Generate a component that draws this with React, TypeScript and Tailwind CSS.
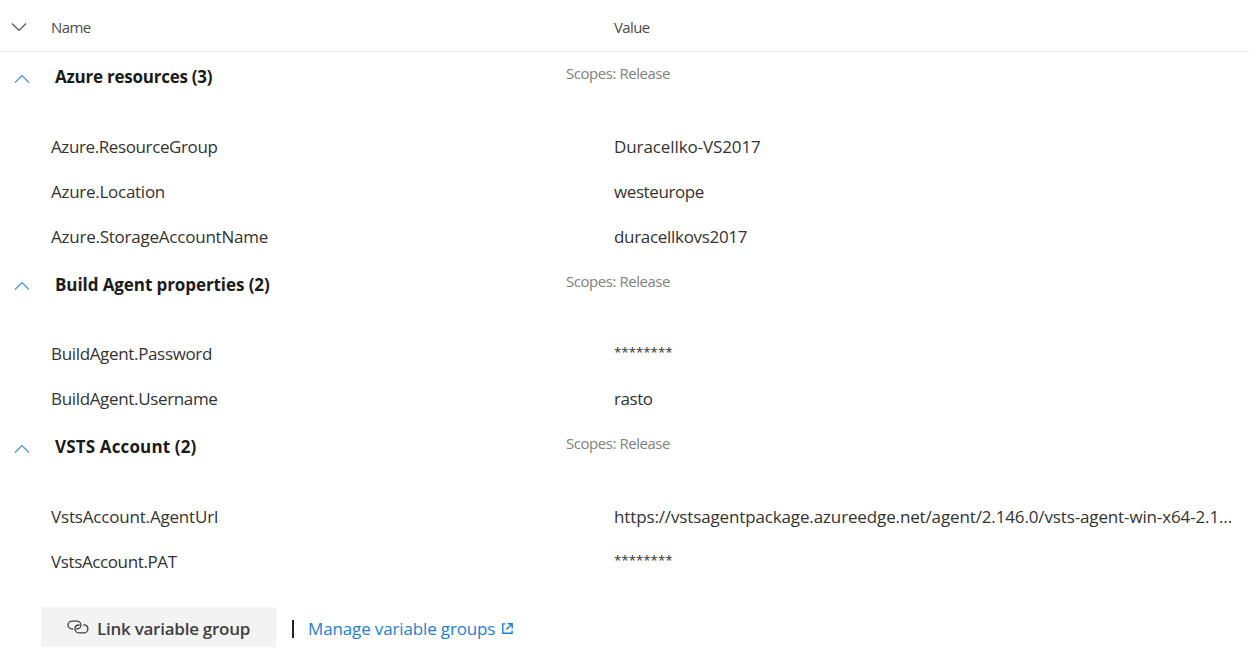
type Variable = {
  name: string;
  nameClass: string;
  value: string;
  valueClass: string;
};

type Group = {
  title: string;
  titleClass: string;
  scopeClass: string;
  chevronClass: string;
  headClass: string;
  variables: Variable[];
};

const SECRET = "text-[13.3px] pb-[1px]";

const groups: Group[] = [
  {
    title: "Azure resources (3)",
    titleClass: "pt-[13px] tracking-[-0.24px]",
    scopeClass: "pt-[9px]",
    chevronClass: "pt-[22px]",
    headClass: "h-[72px]",
    variables: [
      { name: "Azure.ResourceGroup", nameClass: "tracking-[-0.39px]", value: "Duracellko-VS2017", valueClass: "text-[17px] tracking-[-0.1px]" },
      { name: "Azure.Location", nameClass: "tracking-[-0.271px]", value: "westeurope", valueClass: "text-[17px] tracking-[-0.4px]" },
      { name: "Azure.StorageAccountName", nameClass: "tracking-[-0.233px]", value: "duracellkovs2017", valueClass: "text-[17px] tracking-[-0.31px]" },
    ],
  },
  {
    title: "Build Agent properties (2)",
    titleClass: "pt-[14px] tracking-[-0.08px]",
    scopeClass: "pt-[10px]",
    chevronClass: "pt-[22px]",
    headClass: "h-[72px]",
    variables: [
      { name: "BuildAgent.Password", nameClass: "tracking-[-0.34px]", value: "********", valueClass: SECRET },
      { name: "BuildAgent.Username", nameClass: "tracking-[-0.34px]", value: "rasto", valueClass: "text-[17px] tracking-[-0.45px]" },
    ],
  },
  {
    title: "VSTS Account (2)",
    titleClass: "pt-[14px] tracking-[0.146px]",
    scopeClass: "pt-[10px]",
    chevronClass: "pt-[23px]",
    headClass: "h-[73px]",
    variables: [
      {
        name: "VstsAccount.AgentUrl",
        nameClass: "tracking-[-0.18px]",
        value: "https://vstsagentpackage.azureedge.net/agent/2.146.0/vsts-agent-win-x64-2.1...",
        valueClass: "text-[17px] tracking-[-0.134px]",
      },
      { name: "VstsAccount.PAT", nameClass: "tracking-[-0.38px]", value: "********", valueClass: SECRET },
    ],
  },
];

function Chevron({ className, up }: { className: string; up?: boolean }) {
  return (
    <svg width="16" height="10" viewBox="0 0 16 10" fill="none" stroke="currentColor" strokeWidth="1.15" className={className}>
      <path d={up ? "M1 8.5 8 1.5 15 8.5" : "M1 1.5 8 8.5 15 1.5"} />
    </svg>
  );
}

function LinkIcon() {
  return (
    <svg width="22" height="14" viewBox="0 0 22 14" fill="none" stroke="currentColor" strokeWidth="1.3" strokeLinecap="round" className="shrink-0">
      <path d="M5.6 9C3 9 1 7.3 1 5.1S2.8 1.1 5.3 1.1h4.2c2.5 0 4.4 1.7 4.4 4 0 2.2-1.8 3.9-4.2 3.9" />
      <path d="M16.6 4.9c2.4.1 4.3 1.8 4.3 4 0 2.3-1.9 4-4.4 4h-4.2c-2.5 0-4.4-1.7-4.4-4 0-2.2 1.8-3.8 4.2-3.9" />
    </svg>
  );
}

function ExternalIcon() {
  return (
    <svg width="11" height="11" viewBox="0 0 11 11" fill="none" stroke="currentColor" strokeWidth="1.4" className="shrink-0">
      <path d="M3.4.9H.8v9.3h9.3V7.4" />
      <path d="M5.6.8h4.6v4.6M10.2.8 4.4 6.6" />
    </svg>
  );
}

export default function App() {
  return (
    <div className="h-[663px] w-[1258px] overflow-hidden whitespace-nowrap bg-white font-['Open_Sans','Noto_Sans',sans-serif] text-[17px] text-[#333333]">
      <div className="flex h-[52px] w-[1249px] items-center border-b border-[#eaeaea] pt-[4px] text-[15px] text-[#4c4c4c]">
        <div className="flex w-[51px] pl-[11px]">
          <Chevron className="mb-[2px] text-[#555555]" />
        </div>
        <div className="w-[563px] tracking-[-0.6px]">Name</div>
        <div className="tracking-[-0.6px]">Value</div>
      </div>

      {groups.map((group) => (
        <section key={group.title}>
          <div className={`flex items-start ${group.headClass}`}>
            <div className={`w-[55px] pl-[14px] ${group.chevronClass}`}>
              <Chevron up className="text-[#4a90d9]" />
            </div>
            <h2 className={`w-[511px] leading-[24px] font-bold text-[#1b1b1b] ${group.titleClass}`}>{group.title}</h2>
            <div className={`text-[15px] leading-[24px] tracking-[-0.455px] text-[#828282] ${group.scopeClass}`}>Scopes: Release</div>
          </div>
          {group.variables.map((variable) => (
            <div key={variable.name} className="flex h-[45px] items-center pl-[51px]">
              <div className={`w-[563px] ${variable.nameClass}`}>{variable.name}</div>
              <div className={variable.valueClass}>{variable.value}</div>
            </div>
          ))}
        </section>
      ))}

      <div className="mt-[23px] flex h-[40px] items-center pl-[41px]">
        <button className="flex h-[40px] w-[235px] items-center gap-[8px] bg-[#f3f3f3] pl-[26px] text-[#404040]">
          <LinkIcon />
          <span className="pt-[4px] font-semibold tracking-[-0.25px]">Link variable group</span>
        </button>
        <span className="mt-[3px] ml-[16px] h-[18px] w-[2px] bg-[#222222]" />
        <a className="ml-[14px] flex items-center gap-[7px] text-[#1b7fd4]">
          <span className="pt-[4px] tracking-[-0.14px]">Manage variable groups</span>
          <span className="pt-[2px]">
            <ExternalIcon />
          </span>
        </a>
      </div>
    </div>
  );
}
